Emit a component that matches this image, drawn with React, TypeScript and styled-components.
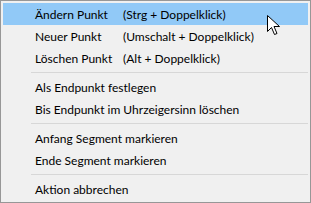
import styled, { createGlobalStyle } from "styled-components";

const Global = createGlobalStyle`
    html, body {
        margin: 0;
        padding: 0;
        background: #ffffff;
    }
`

const Menu = styled.div`
    position: relative;
    box-sizing: border-box;
    width: 311px;
    height: 203px;
    padding: 2px;
    background: #f0f0f0;
    border: 1px solid #979797;
    font-family: "Lato", "Liberation Sans", sans-serif;
    font-size: 12px;
    color: #000000;
    display: flex;
    flex-direction: column;
`

const Item = styled.div<{ $active?: boolean }>`
    display: flex;
    align-items: center;
    height: 22px;
    padding-left: 32px;
    background: ${p => (p.$active ? "#91c9f7" : "transparent")};
    white-space: nowrap;
`

const Label = styled.span`
    width: 88px;
`

const Shortcut = styled.span`
    color: #000000;
`

const Separator = styled.div`
    height: 7px;
    display: flex;
    align-items: center;
    padding-left: 28px;

    &::after {
        content: "";
        flex: 1;
        height: 1px;
        background: #d7d7d7;
    }
`

const Cursor = styled.svg`
    position: absolute;
    left: 266px;
    top: 14px;
`

export default function App() {
    return (
        <>
            <Global />
            <Menu>
                <Item $active>
                    <Label>Ändern Punkt</Label>
                    <Shortcut>(Strg + Doppelklick)</Shortcut>
                </Item>
                <Item>
                    <Label>Neuer Punkt</Label>
                    <Shortcut>(Umschalt + Doppelklick)</Shortcut>
                </Item>
                <Item>
                    <Label>Löschen Punkt</Label>
                    <Shortcut>(Alt + Doppelklick)</Shortcut>
                </Item>
                <Separator />
                <Item>Als Endpunkt festlegen</Item>
                <Item>Bis Endpunkt im Uhrzeigersinn löschen</Item>
                <Separator />
                <Item>Anfang Segment markieren</Item>
                <Item>Ende Segment markieren</Item>
                <Separator />
                <Item>Aktion abbrechen</Item>
                <Cursor width="14" height="22" viewBox="0 0 14 22">
                    <path
                        d="M0.5 0.5 L0.5 16.5 L4.5 12.5 L7.5 19.5 L10 18.5 L7 11.5 L12.5 11.5 Z"
                        fill="#ffffff"
                        stroke="#000000"
                        strokeWidth="1"
                        strokeLinejoin="miter"
                    />
                </Cursor>
            </Menu>
        </>
    );
}
